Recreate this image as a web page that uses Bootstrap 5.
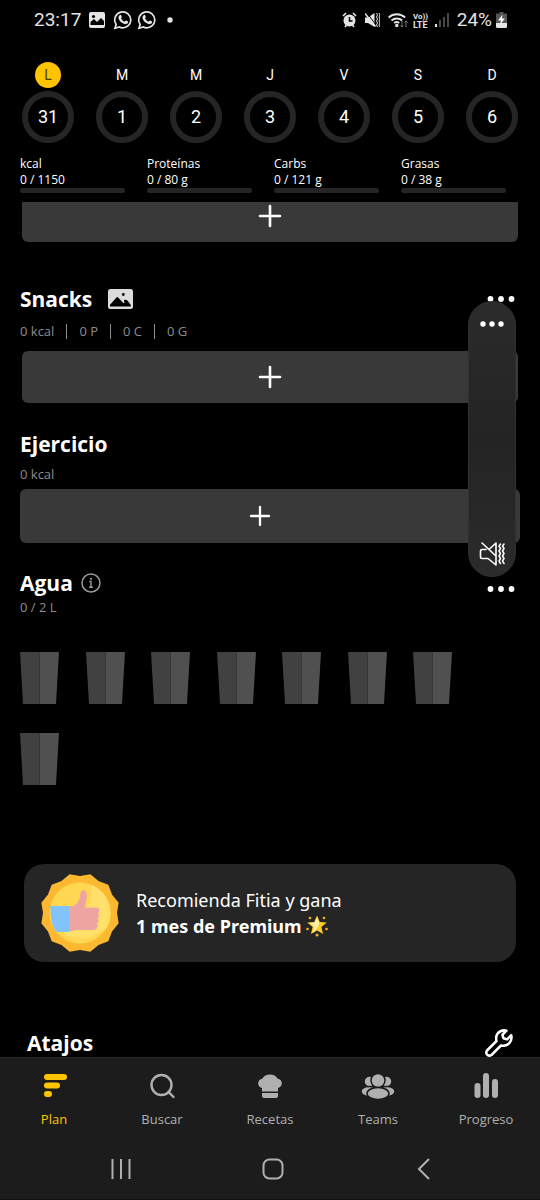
<!DOCTYPE html>
<html lang="es">
<head>
<meta charset="utf-8">
<meta name="viewport" content="width=device-width, initial-scale=1">
<title>Fitia – Plan</title>
<link href="https://cdn.jsdelivr.net/npm/bootstrap@5.3.0/dist/css/bootstrap.min.css" rel="stylesheet">
<style>
  body { background: #000; color: #fff; font-family: "Open Sans", "Noto Sans", sans-serif; }
  svg { display: block; flex: none; }
  button { font: inherit; }
  .plain-btn { background: none; border: 0; padding: 0; color: inherit; }
  .status { height: 40px; padding: 0 33px 0 34px; font: 19px/40px Roboto, sans-serif; color: #e4e4e4; }
  .days { padding: 22px 11px 0; }
  .day { flex: 1 1 0; font-family: Roboto, sans-serif; }
  .day-letter { width: 26px; height: 26px; border-radius: 50%; font-size: 14px; line-height: 26px; }
  .day.active .day-letter { background: #ffc400; color: #4d3b00; }
  .day-ring { width: 52px; height: 52px; margin-top: 3px; border: 6px solid #252525; border-radius: 50%; font-size: 18px; line-height: 40px; }
  .macros { display: grid; grid-template-columns: repeat(4, 1fr); gap: 22px; padding: 13px 34px 9px 20px; font-size: 12px; line-height: 16px; }
  .macros .progress { height: 5px; background: #252525; border-radius: 3px; }
  .view { overflow: hidden; }
  .clip { height: 40px; overflow: hidden; padding: 0 22px; }
  .add-btn { display: block; width: 100%; height: 52px; background: #393939; border: 0; border-radius: 6px; padding: 0; }
  .add-btn.tall { height: 54px; padding-right: 20px; }
  .block { padding: 0 20px; }
  .block h2 { font-size: 21px; line-height: 28px; font-weight: 700; margin: 0; }
  .sub { font-size: 13px; line-height: 20px; color: #8c8c8c; }
  .sub .sep { width: 1px; height: 15px; background: #8c8c8c; }
  .snacks { padding-top: 43px; }
  .snacks .add-wrap { padding: 10px 2px 0; }
  .ejercicio { padding-top: 27px; }
  .ejercicio .sub { padding: 6px 0 5px; }
  .agua { padding-top: 26px; }
  .cups { display: grid; grid-template-columns: repeat(7, 1fr); row-gap: 29px; padding: 35px 41px 0 0; }
  .promo { margin: 79px 24px 0; height: 98px; background: #252525; border: 0; border-radius: 20px; padding: 0 16px; font-family: "Noto Sans", "Open Sans", sans-serif; font-size: 18px; line-height: 26px; text-align: left; color: #fff; }
  .atajos { padding: 67px 27px 0; }
  .volume { position: absolute; top: 99px; right: 24px; width: 48px; height: 276px; border-radius: 24px; border: 1px solid #303030; background: linear-gradient(#2b2b2b, #242424 50%, #2b2b2b); padding: 17px 0 9px; }
  .bottom { background: #1c1c1c; color: #b0b0b0; }
  .tabs { border-top: 1px solid #262626; }
  .tabs a { flex: 1 1 0; padding: 13px 0 10px; font-size: 13px; line-height: 20px; color: #b0b0b0; text-decoration: none; }
  .tabs a.active { color: #ffc400; }
  .tabs svg { margin-bottom: 6px; }
  .sysnav { height: 61px; padding: 0 104px 0 109px; border-bottom: 1px solid #111; }
</style>
</head>
<body class="d-flex flex-column min-vh-100">
<header>
  <div class="status d-flex align-items-center justify-content-between">
    <div class="d-flex align-items-center gap-2">
      <span>23:17</span>
      <svg width="16" height="16" viewBox="0 0 16 16"><rect width="16" height="16" rx="2" fill="#e4e4e4"/><path d="M1.500 13V10l3.500-3 3 3 4-4 3 3v4z" fill="#000"/><circle cx="4.500" cy="4.500" r="1.600" fill="#000"/></svg>
      <div class="d-flex gap-1">
        <svg width="20" height="20" viewBox="0 0 20 20"><path d="M2 18.300l1.100-4A8 8 0 1 1 6.200 17z" fill="none" stroke="#e4e4e4" stroke-width="1.700"/><path d="M6.600 5.200c1-.8 1.500-.3 2.200 1.800-.1.600-.8 1-.6 1.400.8 1.600 1.900 2.600 3.400 3.200.5 0 .9-1.200 1.500-1 2 .9 2.300 1 1.800 2.100-1 2-3.400 1.700-5.600.4C6.700 11.500 5 8.700 5.500 6.800z" fill="#e4e4e4"/></svg>
        <svg width="20" height="20" viewBox="0 0 20 20"><path d="M2 18.300l1.100-4A8 8 0 1 1 6.200 17z" fill="none" stroke="#e4e4e4" stroke-width="1.700"/><path d="M6.600 5.200c1-.8 1.500-.3 2.200 1.800-.1.600-.8 1-.6 1.400.8 1.600 1.900 2.600 3.400 3.200.5 0 .9-1.200 1.500-1 2 .9 2.300 1 1.800 2.100-1 2-3.400 1.700-5.600.4C6.700 11.500 5 8.700 5.500 6.800z" fill="#e4e4e4"/></svg>
      </div>
      <svg width="11" height="6" viewBox="0 0 11 6"><circle cx="5" cy="3" r="2.700" fill="#e4e4e4"/></svg>
    </div>
    <div class="d-flex align-items-center">
      <svg class="me-2" width="15" height="16" viewBox="0 0 15 16"><circle cx="7.500" cy="8.500" r="6" fill="#e4e4e4"/><path d="M7.500 5v4h3" stroke="#000" stroke-width="1.500" fill="none"/><path d="M1 4l3-3M14 4l-3-3M3 15l1.500-2M12 15l-1.500-2" stroke="#e4e4e4" stroke-width="1.700"/></svg>
      <svg class="me-2" width="15" height="16" viewBox="0 0 15 16"><path d="M0 5.500h3L9.500 1v14L3 11H0z" fill="#e4e4e4"/><path d="M2 1l9 12" stroke="#000" stroke-width="1"/><path d="M0 1.500l10.500 13" stroke="#e4e4e4" stroke-width="1.500"/><path d="M11.500 1l1 2-1 2 1 2-1 2 1 2-1 2 1 2M14 1l1 2-1 2 1 2-1 2 1 2-1 2 1 2" fill="none" stroke="#e4e4e4"/></svg>
      <svg class="me-1" width="20" height="16" viewBox="0 0 20 16" fill="none" stroke="#e4e4e4" stroke-width="1.900"><path d="M.6 5.500a12 12 0 0 1 16.500 0M3.500 8.500a8 8 0 0 1 10.700 0M6.200 11a4 4 0 0 1 5 0"/><circle cx="8.800" cy="13.500" r=".8"/><path d="M14 9v6M12.500 13.500l1.500 1.500 1.500-1.500M18 15V9M16.500 10.500L18 9l1.500 1.500" stroke="#777" stroke-width="1"/></svg>
      <svg class="me-1" width="18" height="18" viewBox="0 0 18 18" fill="#e4e4e4" font-family="Roboto, sans-serif" font-weight="700" font-size="8"><text x="1" y="8">Vo))</text><text x="1" y="17" font-size="9">LTE</text></svg>
      <svg class="me-2" width="15" height="16" viewBox="0 0 15 16"><path d="M2 12v3" stroke="#e4e4e4" stroke-width="2"/><path d="M6 8v7M10 5v10M14 1v14" stroke="#555" stroke-width="1.700"/></svg>
      <span>24%</span>
      <svg class="ms-1" width="11" height="16" viewBox="0 0 11 16"><path d="M3.500 0h4v1.500H11V11H0V1.500h3.500z" fill="#555"/><path d="M0 11h11v3.500a1.500 1.500 0 0 1-1.500 1.500h-8A1.500 1.500 0 0 1 0 14.500z" fill="#e4e4e4"/><path d="M6.500 2.500L2 8.500h3l-1 4 5-6H6z" fill="#fff"/></svg>
    </div>
  </div>
  <div class="days d-flex text-center">
    <div class="day active d-flex flex-column align-items-center"><span class="day-letter">L</span><span class="day-ring">31</span></div>
    <div class="day d-flex flex-column align-items-center"><span class="day-letter">M</span><span class="day-ring">1</span></div>
    <div class="day d-flex flex-column align-items-center"><span class="day-letter">M</span><span class="day-ring">2</span></div>
    <div class="day d-flex flex-column align-items-center"><span class="day-letter">J</span><span class="day-ring">3</span></div>
    <div class="day d-flex flex-column align-items-center"><span class="day-letter">V</span><span class="day-ring">4</span></div>
    <div class="day d-flex flex-column align-items-center"><span class="day-letter">S</span><span class="day-ring">5</span></div>
    <div class="day d-flex flex-column align-items-center"><span class="day-letter">D</span><span class="day-ring">6</span></div>
  </div>
  <div class="macros">
    <div>kcal<br>0 / 1150<div class="progress"></div></div>
    <div>Proteínas<br>0 / 80 g<div class="progress"></div></div>
    <div>Carbs<br>0 / 121 g<div class="progress"></div></div>
    <div>Grasas<br>0 / 38 g<div class="progress"></div></div>
  </div>
</header>

<main class="view position-relative flex-grow-1">
  <div class="clip d-flex align-items-end">
    <button class="add-btn flex-shrink-0" type="button" aria-label="Añadir"><svg class="mx-auto" width="24" height="24" viewBox="0 0 24 24"><path d="M12 2v20M2 12h20" stroke="#fff" stroke-width="2.600" stroke-linecap="round"/></svg></button>
  </div>

  <section class="block snacks">
    <div class="d-flex align-items-center">
      <h2>Snacks</h2>
      <button class="plain-btn ms-3" type="button" aria-label="Foto"><svg width="25" height="20" viewBox="0 0 25 20"><rect width="25" height="20" rx="2.500" fill="#dcdcdc"/><path d="M2 17.500v-1.800L8.500 8.500q.8-.8 1.600 0l5.200 5.500q1.200.2 1.200-1-1.500-1.800.6-2.300 1.500-.2 2.700 1.200l3 4v1.600z" fill="#000"/><circle cx="15.300" cy="5.500" r="1.400" fill="#000"/></svg></button>
      <button class="plain-btn ms-auto me-1" type="button" aria-label="Más opciones"><svg width="30" height="8" viewBox="0 0 30 8" fill="#fff"><circle cx="4.500" cy="4" r="2.900"/><circle cx="15" cy="4" r="2.900"/><circle cx="25.500" cy="4" r="2.900"/></svg></button>
    </div>
    <div class="sub d-flex align-items-center mt-2 column-gap-2"><span>0 kcal</span><span class="sep mx-1"></span><span>0 P</span><span class="sep mx-1"></span><span>0 C</span><span class="sep mx-1"></span><span>0 G</span></div>
    <div class="add-wrap"><button class="add-btn" type="button" aria-label="Añadir snack"><svg class="mx-auto" width="24" height="24" viewBox="0 0 24 24"><path d="M12 2v20M2 12h20" stroke="#fff" stroke-width="2.600" stroke-linecap="round"/></svg></button></div>
  </section>

  <section class="block ejercicio">
    <h2>Ejercicio</h2>
    <div class="sub">0 kcal</div>
    <button class="add-btn tall" type="button" aria-label="Añadir ejercicio"><svg class="mx-auto" width="22" height="22" viewBox="0 0 22 22"><path d="M11 2v18M2 11h18" stroke="#fff" stroke-width="2.300" stroke-linecap="round"/></svg></button>
  </section>

  <section class="block agua">
    <div class="d-flex align-items-center">
      <div>
        <div class="d-flex align-items-center"><h2>Agua</h2><button class="plain-btn ms-2" type="button" aria-label="Información"><svg width="20" height="20" viewBox="0 0 20 20"><circle cx="10" cy="10" r="9" fill="none" stroke="#999" stroke-width="1.500"/><path d="M8.300 8.500H10V14M8 14.200h4" fill="none" stroke="#999" stroke-width="1.400"/><circle cx="10" cy="5.800" r="1.100" fill="#999"/></svg></button></div>
        <div class="sub">0 / 2 L</div>
      </div>
      <button class="plain-btn ms-auto me-1 pb-2" type="button" aria-label="Más opciones"><svg width="30" height="8" viewBox="0 0 30 8" fill="#fff"><circle cx="4.500" cy="4" r="2.900"/><circle cx="15" cy="4" r="2.900"/><circle cx="25.500" cy="4" r="2.900"/></svg></button>
    </div>
    <div class="cups" id="cups"></div>
  </section>

  <div class="d-flex"><button class="promo d-flex align-items-center flex-grow-1" type="button">
    <svg width="80" height="80" viewBox="0 0 80 80">
      <path fill="#fcb830" d="M40 3L50.350 1.360 58.500 8 68.280 11.720 72 21.500 78.640 29.650 77 40 78.640 50.350 72 58.500 68.280 68.280 58.500 72 50.350 78.640 40 77 29.650 78.640 21.500 72 11.720 68.280 8 58.500 1.360 50.350 3 40 1.360 29.650 8 21.500 11.720 11.720 21.500 8 29.650 1.360z"/>
      <circle cx="40" cy="40" r="30.500" fill="#ffd750"/><path d="M52 12a30.500 30.500 0 0 1 14 44L46 66 22 62 50 30z" fill="#ffe06a"/>
      <path d="M10.500 33h19v26H17q-3-2-5-9-2-8-1.500-17z" fill="#82c4fa"/>
      <path d="M29 33.500c7 0 10-5 11-10 .5-4 .8-6.500 3.500-6.200 3.500.5 4 5 3 9.700l-2 7.500H56q4 .5 3.500 3-.3 2-2 2.500 2 1 1.600 3-.3 2-2 2.500 2 .8 1.500 2.800-.5 2-2.100 2.300 1.700 1 1.200 3-.7 3-3.700 3.400H37q-3 0-8 1.500z" fill="#eea4a0"/>
    </svg>
    <span class="ms-3">Recomienda Fitia y gana<br><span class="d-flex align-items-center fw-bold">1 mes de Premium
      <svg class="ms-1" width="22" height="22" viewBox="0 0 22 22" role="img" aria-label="estrella brillante"><path d="M11 .5l2.800 6.500 7 .5-5.400 4.600 1.700 7L11 15.500l-6.100 3.600 1.700-7L1.200 7.500l7-.5z" fill="#ffca28"/><path d="M11 2l2 6-1 4-4 5-1.500 1 2-6.500-5-3.500 5.500-.5z" fill="#fff3b0"/><g fill="#f9b51e"><circle cx="4" cy="3" r="1.300"/><circle cx="18" cy="3" r="1.300"/><circle cx="1.500" cy="14" r="1.300"/><circle cx="20.500" cy="14" r="1.300"/><circle cx="11" cy="20" r="1.500"/></g></svg></span></span>
  </button></div>

  <div class="atajos block d-flex justify-content-between align-items-center">
    <h2>Atajos</h2>
    <button class="plain-btn" type="button" aria-label="Editar atajos"><svg width="28" height="28" viewBox="0 0 28 28"><path d="M21.500 1.700Q16 .3 12.300 5 10.500 8 11.500 12L2 21.500Q.5 24 2.200 25.700 4.200 27.400 6.500 26L16 16.500Q20.500 17.600 24 14.500 27.500 11 26.200 6.200L22 10.400 18.500 9.300 17.400 5.800z" fill="none" stroke="#fff" stroke-width="2.500" stroke-linejoin="round"/></svg></button>
  </div>

  <div class="volume d-flex flex-column justify-content-between align-items-center">
    <button class="plain-btn" type="button" aria-label="Ajustes de volumen"><svg width="26" height="10" viewBox="0 0 26 10" fill="#fff"><circle cx="4" cy="5" r="2.700"/><circle cx="13" cy="5" r="2.700"/><circle cx="22" cy="5" r="2.700"/></svg></button>
    <button class="plain-btn" type="button" aria-label="Silenciar"><svg width="26" height="26" viewBox="0 0 26 26" fill="none" stroke="#fff" stroke-width="1.600" stroke-linejoin="round" stroke-linecap="round"><path d="M10 8.500L17 2v22l-8-6.500H3q-1.500 0-1.500-1.500v-6q0-1.500 1.500-1.500h4M3 2l14 13"/><path d="M21.500 3l-1.500 2 1.500 2.500L20 10l1.500 2.500L20 15l1.500 2.500L20 20l1.500 2.500M25 3l-1.500 2L25 7.500 23.500 10l1.500 2.500-1.500 2.500 1.500 2.500-1.500 2.500 1.500 2.500" stroke-width="1.500"/></svg></button>
  </div>
</main>

<footer class="bottom">
  <nav class="tabs d-flex">
    <a href="#plan" class="active d-flex flex-column align-items-center" aria-current="page"><svg width="28" height="32" viewBox="0 0 28 32" fill="#ffc400"><rect x="4" y="3" width="23" height="6" rx="3"/><rect x="4" y="11.500" width="16" height="6" rx="3"/><rect x="4" y="20" width="8" height="6" rx="3"/></svg>Plan</a>
    <a href="#buscar" class="d-flex flex-column align-items-center"><svg width="28" height="32" viewBox="0 0 28 32" fill="none" stroke="#b0b0b0" stroke-width="2.400" stroke-linecap="round"><circle cx="13.500" cy="14" r="10"/><path d="M20.500 21l5 5"/></svg>Buscar</a>
    <a href="#recetas" class="d-flex flex-column align-items-center"><svg width="28" height="32" viewBox="0 0 28 32" fill="#b0b0b0"><path d="M6 20.500V17C1 16 .7 8.500 6.500 7.500 9 2 19 2 21.500 7.500c5.800 1 5.500 8.500.5 9.500v3.500zM6 22h16v3q0 2-2 2H8q-2 0-2-2z"/></svg>Recetas</a>
    <a href="#teams" class="d-flex flex-column align-items-center"><svg width="34" height="32" viewBox="0 0 34 32" fill="#b0b0b0" stroke="#1c1c1c" stroke-width="1.500"><circle cx="8.500" cy="10.500" r="5.500"/><circle cx="25.500" cy="10.500" r="5.500"/><ellipse cx="8" cy="20.500" rx="8" ry="5"/><ellipse cx="26" cy="20.500" rx="8" ry="5"/><circle cx="17" cy="9.500" r="7"/><ellipse cx="17" cy="22.500" rx="11" ry="6"/></svg>Teams</a>
    <a href="#progreso" class="d-flex flex-column align-items-center"><svg width="28" height="32" viewBox="0 0 28 32" fill="#b0b0b0"><rect x="2.500" y="12" width="6" height="15" rx="3"/><rect x="11" y="2" width="6" height="25" rx="3"/><rect x="20" y="8" width="6" height="19" rx="3"/></svg>Progreso</a>
  </nav>
  <div class="sysnav d-flex align-items-center justify-content-between">
    <button class="plain-btn" type="button" aria-label="Recientes"><svg width="24" height="24" viewBox="0 0 24 24" stroke="#b0b0b0" stroke-width="2"><path d="M3.500 2v20M12 2v20M20.500 2v20"/></svg></button>
    <button class="plain-btn" type="button" aria-label="Inicio"><svg width="24" height="24" viewBox="0 0 24 24"><rect x="2.500" y="2.500" width="19" height="19" rx="6" fill="none" stroke="#b0b0b0" stroke-width="2"/></svg></button>
    <button class="plain-btn" type="button" aria-label="Atrás"><svg width="24" height="24" viewBox="0 0 24 24"><path d="M17 2L7 12l10 10" fill="none" stroke="#b0b0b0" stroke-width="2"/></svg></button>
  </div>
</footer>
<script src="https://cdn.jsdelivr.net/npm/bootstrap@5.3.0/dist/js/bootstrap.bundle.min.js"></script>
<script>
  // One glass per 250 ml of the daily goal
  const cup = '<svg width="39" height="52" viewBox="0 0 39 52"><path d="M0 0h19.500v52H3z" fill="#414141"/><path d="M19.500 0H39l-3 52H19.500z" fill="#505050"/></svg>';
  document.getElementById('cups').innerHTML = cup.repeat(8);
</script>
</body>
</html>
